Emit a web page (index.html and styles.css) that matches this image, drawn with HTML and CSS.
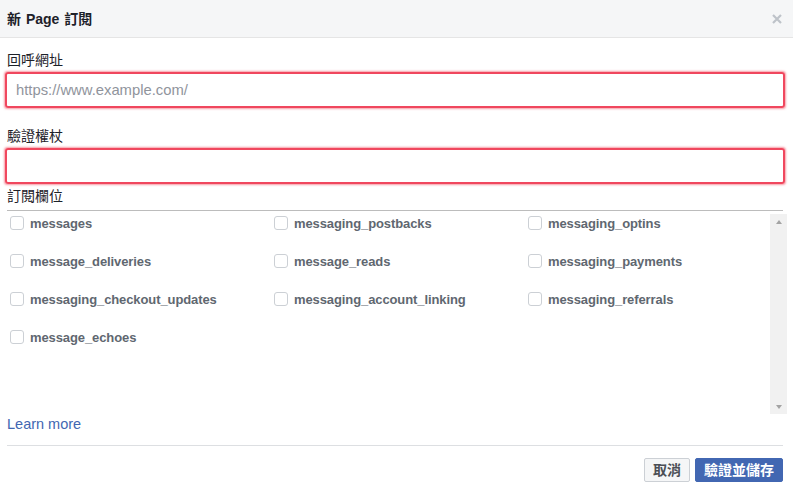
FILE: index.html
```html
<!DOCTYPE html>
<html lang="zh-Hant">
<head>
<meta charset="utf-8">
<title>新 Page 訂閱</title>
<link rel="stylesheet" href="styles.css">
</head>
<body>
<div class="dialog">
  <div class="header">
    <h1 class="title">新 Page 訂閱</h1>
    <button class="close" aria-label="close">
      <svg width="10" height="10" viewBox="0 0 10 10"><path d="M1 1L9 9M9 1L1 9" stroke="#bec3c9" stroke-width="2.2" fill="none"/></svg>
    </button>
  </div>
  <div class="content">
    <label class="label">回呼網址</label>
    <div class="input"><span class="placeholder">https://www.example.com/</span></div>
    <label class="label label-gap">驗證權杖</label>
    <div class="input"></div>
    <div class="label label-fields">訂閱欄位</div>
    <div class="fields">
      <div class="grid">
        <div class="item"><span class="cb"></span>messages</div>
        <div class="item"><span class="cb"></span>messaging_postbacks</div>
        <div class="item"><span class="cb"></span>messaging_optins</div>
        <div class="item"><span class="cb"></span>message_deliveries</div>
        <div class="item"><span class="cb"></span>message_reads</div>
        <div class="item"><span class="cb"></span>messaging_payments</div>
        <div class="item"><span class="cb"></span>messaging_checkout_updates</div>
        <div class="item"><span class="cb"></span>messaging_account_linking</div>
        <div class="item"><span class="cb"></span>messaging_referrals</div>
        <div class="item"><span class="cb"></span>message_echoes</div>
      </div>
      <div class="scrollbar">
        <span class="arrow up"></span>
        <span class="arrow down"></span>
      </div>
    </div>
    <a class="learn" href="#">Learn more</a>
    <div class="footer">
      <button class="btn btn-cancel">取消</button>
      <button class="btn btn-primary">驗證並儲存</button>
    </div>
  </div>
</div>
</body>
</html>
```
FILE: styles.css
```css
html, body {
  margin: 0;
  padding: 0;
  background: #fff;
}
body {
  font-family: "Liberation Sans", Arial, "Noto Sans CJK TC", sans-serif;
  color: #1d2129;
}
.dialog {
  width: 793px;
  height: 489px;
  overflow: hidden;
}
.header {
  height: 37px;
  background: #f5f6f7;
  border-bottom: 1px solid #e5e5e5;
  display: flex;
  align-items: center;
  justify-content: space-between;
  padding: 0 11px 0 7px;
}
.title {
  margin: 0;
  font-size: 14px;
  font-weight: bold;
  color: #1d2129;
  line-height: 18px;
  word-spacing: 1px;
}
.close {
  border: 0;
  background: none;
  padding: 0;
  width: 10px;
  height: 10px;
  display: flex;
}
.content {
  padding: 12px 10px 0 7px;
  display: flex;
  flex-direction: column;
}
.label {
  font-size: 14px;
  line-height: 20px;
  color: #1d2129;
}
.label-gap {
  margin-top: 18px;
}
.input {
  margin: 2px -2px 0 -2px;
  height: 32px;
  border: 2px solid #f0475e;
  box-shadow: 0 0 2px 0.5px rgba(240, 60, 80, 0.5);
  border-radius: 3px;
  display: flex;
  align-items: center;
  padding-left: 9px;
}
.placeholder {
  font-size: 14.8px;
  color: #90949c;
}
.label-fields {
  margin-top: 2px;
  padding-bottom: 4px;
  border-bottom: 1px solid #bcbcbc;
}
.fields {
  display: flex;
  height: 203px;
  margin-right: -4px;
}
.grid {
  flex: 1;
  display: grid;
  grid-template-columns: 264px 254px 1fr;
  grid-auto-rows: 24px;
  row-gap: 14px;
  padding-left: 3px;
  align-content: start;
}
.item {
  display: flex;
  align-items: center;
  font-size: 13px;
  font-weight: bold;
  color: #606770;
  white-space: nowrap;
  letter-spacing: -0.1px;
}
.cb {
  width: 12px;
  height: 12px;
  border: 1px solid #ccd0d5;
  border-radius: 3px;
  background: #fff;
  margin-right: 6px;
  flex: none;
}
.scrollbar {
  width: 17px;
  margin-top: 3px;
  background: #f1f1f1;
  display: flex;
  flex-direction: column;
  justify-content: space-between;
  align-items: center;
  padding: 6px 0 5px;
}
.arrow {
  width: 0;
  height: 0;
  border-left: 3.5px solid transparent;
  border-right: 3.5px solid transparent;
}
.arrow.up {
  border-bottom: 4px solid #a3a3a3;
}
.arrow.down {
  border-top: 4px solid #a3a3a3;
}
.learn {
  font-size: 14.5px;
  line-height: 20px;
  color: #4267b2;
  text-decoration: none;
  padding-bottom: 11px;
  border-bottom: 1px solid #dddfe2;
}
.footer {
  display: flex;
  justify-content: flex-end;
  gap: 5px;
  padding-top: 12px;
}
.btn {
  height: 24px;
  font-family: "Liberation Sans", Arial, "Noto Sans CJK TC", sans-serif;
  font-size: 14px;
  font-weight: bold;
  border-radius: 2px;
  padding: 0 8px;
  line-height: 22px;
  margin: 0;
}
.btn-cancel {
  background: #f5f6f7;
  border: 1px solid #ccd0d5;
  color: #4b4f56;
}
.btn-primary {
  background: #4267b2;
  border: 1px solid #4267b2;
  color: #fff;
}
```
